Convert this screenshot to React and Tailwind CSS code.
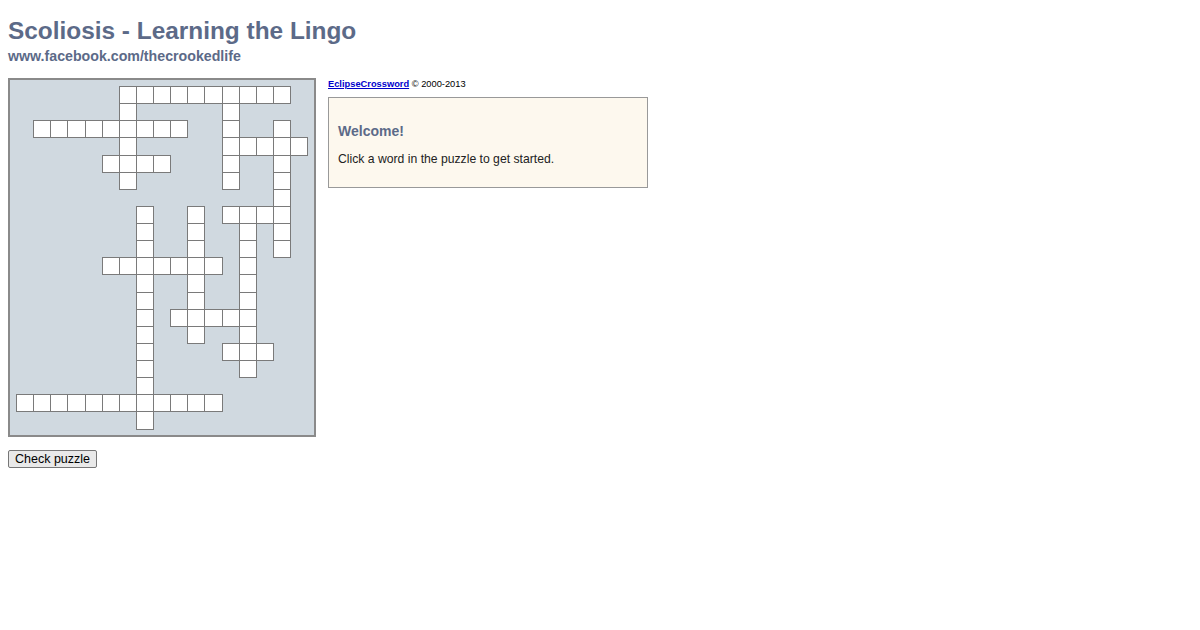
const cells = [
  [0, [6, 7, 8, 9, 10, 11, 12, 13, 14, 15]],
  [1, [6, 12]],
  [2, [1, 2, 3, 4, 5, 6, 7, 8, 9, 12, 15]],
  [3, [6, 12, 13, 14, 15, 16]],
  [4, [5, 6, 7, 8, 12, 15]],
  [5, [6, 12, 15]],
  [6, [15]],
  [7, [7, 10, 12, 13, 14, 15]],
  [8, [7, 10, 13, 15]],
  [9, [7, 10, 13, 15]],
  [10, [5, 6, 7, 8, 9, 10, 11, 13]],
  [11, [7, 10, 13]],
  [12, [7, 10, 13]],
  [13, [7, 9, 10, 11, 12, 13]],
  [14, [7, 10, 13]],
  [15, [7, 12, 13, 14]],
  [16, [7, 13]],
  [17, [7]],
  [18, [0, 1, 2, 3, 4, 5, 6, 7, 8, 9, 10, 11]],
  [19, [7]],
];

function Puzzle() {
  const items = [];
  cells.forEach(([r, cols]) =>
    cols.forEach((c) =>
      items.push(
        <div
          key={r + "-" + c}
          className="w-[18.14px] h-[18.14px] bg-white border border-[#7a7a7a]"
          style={{ gridRow: r + 1, gridColumn: c + 1 }}
        />
      )
    )
  );
  return (
    <div className="w-[308px] h-[359px] border-2 border-[#8a8a8a] bg-[#d0d9e0] pt-[6px] pl-[6px]">
      <div className="grid grid-cols-[repeat(17,17.14px)] grid-rows-[repeat(20,17.14px)]">{items}</div>
    </div>
  );
}

export default function App() {
  return (
    <div className="min-h-[630px] bg-white px-2 pt-[16px] font-['Liberation_Sans',Arial,sans-serif] text-black">
      <h1 className="text-[24.4px] leading-[30px] font-bold text-[#5c6a88]">Scoliosis - Learning the Lingo</h1>
      <div className="text-[14.2px] leading-[18px] font-bold text-[#5c6a88] mt-[1px]">www.facebook.com/thecrookedlife</div>
      <div className="flex gap-3 mt-[13px]">
        <Puzzle />
        <div>
          <div className="text-[9.3px] leading-[12px]">
            <a href="#" className="font-bold text-[#0000cc] underline">EclipseCrossword</a> © 2000-2013
          </div>
          <div className="mt-[7px] w-[320px] h-[91px] border border-[#999] bg-[#fdf8ee] px-[9px] pt-[24px]">
            <div className="text-[14px] leading-[18px] font-bold text-[#5c6a88]">Welcome!</div>
            <div className="text-[12.2px] leading-[16px] mt-[11px] text-[#222]">Click a word in the puzzle to get started.</div>
          </div>
        </div>
      </div>
      <button className="mt-[13px] h-[18px] px-[6px] text-[12.5px] leading-[14px] bg-[#e9e9e9] border border-[#767676] rounded-[2px] text-black">
        Check puzzle
      </button>
    </div>
  );
}
